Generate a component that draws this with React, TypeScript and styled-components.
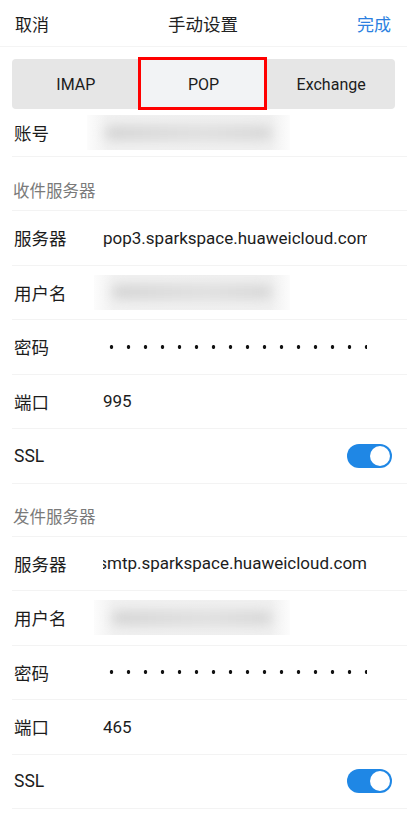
import React from "react";
import styled, { createGlobalStyle } from "styled-components";

const GlobalStyle = createGlobalStyle`
  body {
    margin: 0;
    background: #ffffff;
    font-family: "Roboto", "Noto Sans CJK SC", sans-serif;
    color: #1c1c1c;
  }
`;

const Page = styled.div`
  width: 407px;
  min-height: 813px;
  background: #ffffff;
  overflow: hidden;
`;

const Header = styled.div`
  height: 46px;
  padding: 0 16px 0 15px;
  display: flex;
  align-items: center;
  justify-content: space-between;
  border-bottom: 1px solid #f4f4f4;
  font-size: 17px;
`;

const HeaderTitle = styled.div`
  font-size: 17.5px;
  color: #222;
`;

const HeaderAction = styled.div<{ $primary?: boolean }>`
  color: ${(p) => (p.$primary ? "#2b7fe0" : "#1c1c1c")};
  width: 40px;
  text-align: ${(p) => (p.$primary ? "right" : "left")};
`;

const SegmentWrapper = styled.div`
  padding: 12px 12px 0;
`;

const Segment = styled.div`
  display: grid;
  grid-template-columns: repeat(3, 1fr);
  height: 50px;
  background: #e6e6e6;
  border-radius: 4px;
`;

const SegmentItem = styled.div<{ $active?: boolean }>`
  position: relative;
  display: flex;
  align-items: center;
  justify-content: center;
  font-size: 16px;
  color: #1c1c1c;
  background: ${(p) => (p.$active ? "#f2f3f5" : "transparent")};

  ${(p) =>
    p.$active &&
    `
    &::after {
      content: "";
      position: absolute;
      top: -2px;
      bottom: -1px;
      left: -2px;
      right: 0px;
      border: 3px solid #ff0000;
    }
  `}
`;

const Row = styled.div<{ $height?: number }>`
  box-sizing: border-box;
  height: ${(p) => p.$height ?? 54.5}px;
  margin-left: 12px;
  padding-left: 2px;
  padding-right: 15px;
  display: flex;
  align-items: center;
  border-bottom: 1px solid #f3f3f3;
`;

const Label = styled.div`
  width: 89px;
  flex-shrink: 0;
  font-size: 17.5px;
  color: #1c1c1c;
`;

const Value = styled.div<{ $alignEnd?: boolean }>`
  width: 264px;
  overflow: hidden;
  white-space: nowrap;
  display: flex;
  justify-content: ${(p) => (p.$alignEnd ? "flex-end" : "flex-start")};
  font-size: 17px;
  color: #1c1c1c;
`;

const Blurred = styled.div<{ $offset: number; $width: number }>`
  margin-left: ${(p) => p.$offset}px;
  width: ${(p) => p.$width}px;
  height: 35px;
  background: linear-gradient(90deg, #fcfcfc 0%, #f1f1f1 10%, #f0f0f0 90%, #fcfcfc 100%);
  overflow: hidden;
  display: flex;
  align-items: center;
  justify-content: center;
`;

const BlurInner = styled.div`
  width: 82%;
  height: 14px;
  border-radius: 8px;
  background: linear-gradient(90deg, #d2d2d2, #dadada 40%, #dddddd 60%, #d5d5d5);
  filter: blur(6px);
`;

const Dots = styled.div`
  width: 264px;
  height: 10px;
  background-image: radial-gradient(circle, #111 1.6px, transparent 2.1px);
  background-size: 17px 10px;
  background-repeat: repeat-x;
`;

const SectionTitle = styled.div<{ $height: number }>`
  box-sizing: border-box;
  height: ${(p) => p.$height}px;
  margin-left: 12px;
  padding-left: 1px;
  padding-bottom: 8px;
  display: flex;
  align-items: flex-end;
  font-size: 16.5px;
  color: #7a7a7a;
  border-bottom: 1px solid #f3f3f3;
`;

const Spacer = styled.div`
  flex: 1;
`;

const Toggle = styled.div`
  width: 45px;
  height: 24px;
  border-radius: 12px;
  background: #1f87e5;
  display: flex;
  align-items: center;
  justify-content: flex-end;
  padding-right: 2px;
  box-sizing: border-box;
`;

const Knob = styled.div`
  width: 20px;
  height: 20px;
  border-radius: 50%;
  background: #ffffff;
`;

type ServerProps = {
  title: string;
  titleHeight: number;
  host: string;
  hostAlignEnd?: boolean;
  port: string;
};

function ServerSection({ title, titleHeight, host, hostAlignEnd, port }: ServerProps) {
  return (
    <>
      <SectionTitle $height={titleHeight}>{title}</SectionTitle>
      <Row>
        <Label>服务器</Label>
        <Value $alignEnd={hostAlignEnd}>{host}</Value>
      </Row>
      <Row>
        <Label>用户名</Label>
        <Blurred $offset={-9} $width={196}>
          <BlurInner />
        </Blurred>
      </Row>
      <Row>
        <Label>密码</Label>
        <Dots />
      </Row>
      <Row>
        <Label>端口</Label>
        <Value>{port}</Value>
      </Row>
      <Row>
        <Label>SSL</Label>
        <Spacer />
        <Toggle>
          <Knob />
        </Toggle>
      </Row>
    </>
  );
}

export default function App() {
  return (
    <Page>
      <GlobalStyle />
      <Header>
        <HeaderAction>取消</HeaderAction>
        <HeaderTitle>手动设置</HeaderTitle>
        <HeaderAction $primary>完成</HeaderAction>
      </Header>
      <SegmentWrapper>
        <Segment>
          <SegmentItem>IMAP</SegmentItem>
          <SegmentItem $active>POP</SegmentItem>
          <SegmentItem>Exchange</SegmentItem>
        </Segment>
      </SegmentWrapper>
      <Row $height={48}>
        <Label>账号</Label>
        <Blurred $offset={-16} $width={203}>
          <BlurInner />
        </Blurred>
      </Row>
      <ServerSection
        title="收件服务器"
        titleHeight={54}
        host="pop3.sparkspace.huaweicloud.com"
        port="995"
      />
      <ServerSection
        title="发件服务器"
        titleHeight={53}
        host="smtp.sparkspace.huaweicloud.com"
        hostAlignEnd
        port="465"
      />
    </Page>
  );
}
